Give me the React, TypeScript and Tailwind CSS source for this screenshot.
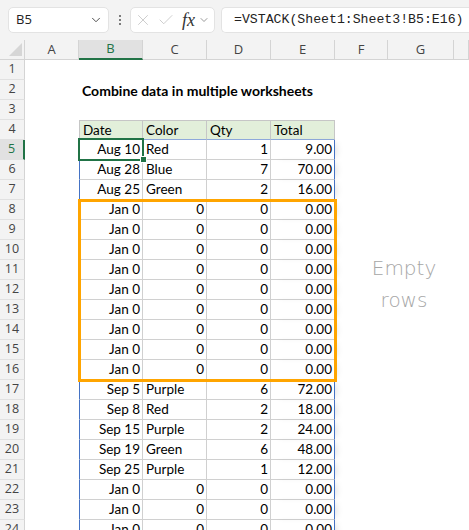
import React from "react";
import { ChevronDown, X, Check } from "lucide-react";

// column widths A..G, then a sliver of H
const COLS = [
  { id: "A", w: 54 },
  { id: "B", w: 64 },
  { id: "C", w: 64 },
  { id: "D", w: 64 },
  { id: "E", w: 64 },
  { id: "F", w: 53 },
  { id: "G", w: 66 },
  { id: "H", w: 15 },
];

type Row = [string, string, string, string];

const blank: Row = ["Jan 0", "0", "0", "0.00"];

const tableRows: Row[] = [
  ["Aug 10", "Red", "1", "9.00"],
  ["Aug 28", "Blue", "7", "70.00"],
  ["Aug 25", "Green", "2", "16.00"],
  blank, blank, blank, blank, blank, blank, blank, blank, blank,
  ["Sep 5", "Purple", "6", "72.00"],
  ["Sep 8", "Red", "2", "18.00"],
  ["Sep 15", "Purple", "2", "24.00"],
  ["Sep 19", "Green", "6", "48.00"],
  ["Sep 25", "Purple", "1", "12.00"],
  blank, blank, blank,
];

const isNum = (s: string) => /^[0-9.]+$/.test(s);

const cellFont = "font-['Lato','Liberation_Sans',sans-serif] text-[13.5px] text-black";

const RowHeader: React.FC<{ n: number; active?: boolean }> = ({ n, active }) => (
  <div
    className={`w-[25px] shrink-0 h-[20px] flex items-center justify-center border-b border-[#e1e1e1] font-['Open_Sans',sans-serif] text-[12.5px] ${
      active
        ? "bg-[#e1e1e1] text-[#217346] border-r-2 border-r-[#217346]"
        : "bg-[#f3f3f3] text-[#444] border-r border-r-[#d4d4d4]"
    }`}
  >
    {n}
  </div>
);

const SheetRow: React.FC<{ n: number }> = ({ n }) => {
  const data = n === 4 ? ["Date", "Color", "Qty", "Total"] : n >= 5 ? tableRows[n - 5] : null;

  return (
    <div className="flex h-[20px]">
      <RowHeader n={n} active={n === 5} />
      {/* column A */}
      <div className="w-[54px] shrink-0" />
      {data ? (
        data.map((v, i) => {
          const header = n === 4;
          let cls = "shrink-0 w-[64px] h-[20px] flex items-center whitespace-nowrap overflow-hidden border-r border-b ";
          if (header) {
            cls += "bg-[#e2efda] border-t border-[#c6c6c6] border-b-[#8ea9db] pl-[3px] ";
            if (i === 0) cls += "border-l ";
          } else {
            cls += "border-[#d0d0d0] ";
            if (i === 0) cls += "border-l border-l-[#4472c4] ";
            if (i === 3) cls += "border-r-[#4472c4] shadow-[5px_0_6px_-3px_rgba(0,0,0,0.10)] ";
            cls += isNum(v) || i === 0 ? "justify-end pr-[2px] " : "pl-[3px] ";
          }
          return (
            <div key={i} className={`${cls}${cellFont}`}>
              {v}
            </div>
          );
        })
      ) : n === 2 ? (
        <div className="w-[256px] shrink-0 flex items-center pl-[3px] whitespace-nowrap font-bold font-['Lato','Liberation_Sans',sans-serif] text-[14px] text-black">
          Combine data in multiple worksheets
        </div>
      ) : (
        <div className="w-[256px] shrink-0" />
      )}
    </div>
  );
};

export default function App() {
  const rows = Array.from({ length: 24 }, (_, i) => i + 1);

  return (
    <div className="relative w-[469px] h-[530px] overflow-hidden bg-white">
      {/* formula bar */}
      <div className="h-[40px] bg-[#f3f3f3] flex items-center">
        <div className="ml-[8px] w-[101px] h-[26px] bg-white rounded-[5px] border border-[#e3e3e3] flex items-center justify-between pl-[7px] pr-[5px]">
          <span className="font-['Open_Sans',sans-serif] text-[13px] text-[#222]">B5</span>
          <ChevronDown size={14} strokeWidth={1.6} className="text-[#444]" />
        </div>
        <div className="w-[21px] flex flex-col items-center gap-[2px]">
          <span className="w-[2px] h-[2px] bg-[#555] rounded-full" />
          <span className="w-[2px] h-[2px] bg-[#555] rounded-full" />
          <span className="w-[2px] h-[2px] bg-[#555] rounded-full" />
        </div>
        <div className="w-[85px] h-[26px] bg-white rounded-[5px] border border-[#e3e3e3] flex items-center pl-[3px]">
          <X size={18} strokeWidth={1.1} className="text-[#c4c4c4]" />
          <Check size={18} strokeWidth={1.1} className="ml-[5px] text-[#c4c4c4]" />
          <span className="ml-[7px] font-['Liberation_Serif',serif] italic text-[18px] text-[#333] leading-none">fx</span>
          <ChevronDown size={12} strokeWidth={1.5} className="ml-[3px] text-[#777]" />
        </div>
        <div className="ml-[6px] flex-1 h-[26px] bg-white rounded-l-[5px] border border-r-0 border-[#e3e3e3] flex items-center pl-[12px] whitespace-nowrap overflow-hidden">
          <span className="font-['Liberation_Mono',monospace] text-[13.2px] text-[#222]">=VSTACK(Sheet1:Sheet3!B5:E16)</span>
        </div>
      </div>

      {/* column headers */}
      <div className="flex h-[20px]">
        <div className="relative w-[25px] shrink-0 bg-[#f3f3f3] border-r border-b border-[#d4d4d4]">
          <svg className="absolute left-[9px] top-[3px]" width="13" height="13" viewBox="0 0 13 13">
            <polygon points="13,0 13,13 0,13" fill="#d6d6d6" />
          </svg>
        </div>
        {COLS.map((c) => (
          <div
            key={c.id}
            style={{ width: c.w }}
            className={`shrink-0 flex items-center justify-center font-['Open_Sans',sans-serif] text-[13px] ${
              c.id === "B"
                ? "bg-[#e1e1e1] text-[#217346] border-b-2 border-b-[#217346] border-r border-r-[#d4d4d4]"
                : "bg-[#f3f3f3] text-[#444] border-b border-r border-[#d4d4d4]"
            }`}
          >
            {c.id !== "H" ? c.id : ""}
          </div>
        ))}
      </div>

      {/* sheet body */}
      <div className="flex flex-col">
        {rows.map((n) => (
          <SheetRow key={n} n={n} />
        ))}
      </div>

      {/* orange highlight around rows 8-16 */}
      <div className="absolute left-[78px] top-[199px] w-[259px] h-[183px] border-[3px] border-[#ffa500] pointer-events-none" />

      {/* active cell B5 */}
      <div className="absolute left-[78px] top-[138px] w-[66px] h-[23px] border-2 border-[#217346] pointer-events-none" />
      <div className="absolute left-[140px] top-[156px] w-[7px] h-[7px] bg-[#217346] border border-white pointer-events-none" />

      {/* annotation */}
      <div className="absolute left-[360px] top-[252px] w-[88px] text-center font-['DejaVu_Sans',sans-serif] font-extralight text-[20px] leading-[32px] text-[#a6a6a6]">
        Empty
        <br />
        rows
      </div>
    </div>
  );
}
